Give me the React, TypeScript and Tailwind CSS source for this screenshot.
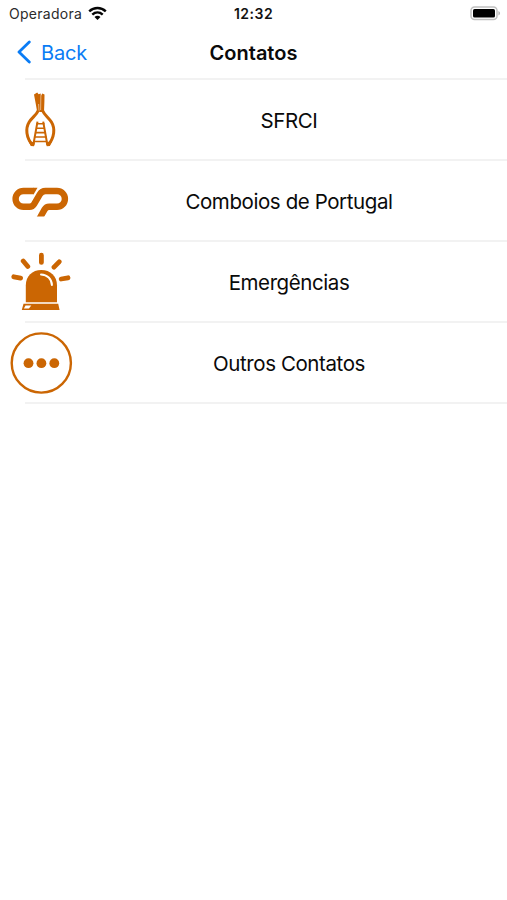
import type { ReactNode } from "react";

const ORANGE = "#cb6603";

function TowerIcon() {
  return (
    <svg width="70" height="70" viewBox="0 0 70 70" fill="none" stroke={ORANGE} className="block">
      <path d="M24 9.5L27.2 7.4l1.4 1.8 2-.8.5 2 1.2-1.8 2.2.8-.1 7-.4 10.5H27.2L25.6 18z" fill={ORANGE} stroke="none" />
      <path d="M30.9 9.5L30.6 25M28.6 19L29 27" stroke="#fff" strokeWidth=".5" />
      <path d="M28.3 25.5C26.5 30 22 32.5 19.2 37C15.2 43.5 16.2 52.5 22.3 59.8M32.5 25.5C34.3 30 38.6 32.5 41.4 37C45.4 43.5 44.4 52.5 38.3 59.8" strokeWidth="3" />
      <path d="M27.5 36.6L23.3 60M33.2 36.6L37.4 60" strokeWidth="2" />
      <path d="M26.5 38.8h8M26 43.2h9M25.3 47.6h10.4M24.5 52h12M23.8 56.5h13.4" strokeWidth="1.6" />
      <path d="M18.3 56L25 57.5 24 61.3 20.8 61zM42.3 56L35.7 57.5 36.8 61.3 39.9 61z" fill={ORANGE} stroke="none" />
    </svg>
  );
}

function TrainsIcon() {
  return (
    <svg width="75" height="50" viewBox="0 0 75 50" fill="none" className="block">
      <clipPath id="logo-base">
        <rect width="75" height="41.4" />
      </clipPath>
      <path
        clipPath="url(#logo-base)"
        d="M28.5 16H18.5a7.9 7.9 0 0 0 0 15.8H24.5q3 0 4.6-2.7L34.8 19.4Q36.8 16 40.5 16H52a7.9 7.9 0 0 1 0 15.8H44.2q-3 0-4.6 2.7L34.5 43.5"
        stroke={ORANGE}
        strokeWidth="6.4"
      />
      <path d="M28 12.8h4.5L28.7 19.2H28z" fill={ORANGE} />
    </svg>
  );
}

function SirenIcon() {
  return (
    <svg width="75" height="75" viewBox="0 0 75 75" fill="none" className="block">
      <path d="M20.8 57.2V40.5C20.8 31 27.3 25 36.3 25S52 31 52 40.5V57.2z" fill={ORANGE} />
      <path d="M36 29.5C42.2 29.7 46.7 33.8 46.9 40" stroke="#fff" strokeWidth="2" strokeLinecap="round" />
      <path d="M18.5 58.8h34.7l1.4 6.2H16.8z" fill={ORANGE} />
      <path d="M20.5 60.4h5.8l-2.4 3h-5z" fill="#fff" />
      <path d="M36.4 10.2v7.2M18.2 16l4.6 5.5M54.2 16.8l-5.2 5.4M8.8 31.8l6.8 1.3M63 32.8l-6.8 1.2" stroke={ORANGE} strokeWidth="4.8" strokeLinecap="round" />
    </svg>
  );
}

function MoreIcon() {
  return (
    <svg width="75" height="75" viewBox="0 0 75 75" fill="none" className="block">
      <circle cx="36.3" cy="38" r="29.6" stroke={ORANGE} strokeWidth="2.4" />
      <circle cx="23.5" cy="38.2" r="4.9" fill={ORANGE} />
      <circle cx="36.4" cy="38.2" r="4.9" fill={ORANGE} />
      <circle cx="49.3" cy="38.2" r="4.9" fill={ORANGE} />
    </svg>
  );
}

function StatusBar() {
  return (
    <div className="grid h-[27px] grid-cols-3 items-center">
      <div className="flex items-center pl-[9px]">
        <span className="w-[79px] text-[14px] leading-5 tracking-[0.28px] text-[#2b2b2b]">Operadora</span>
        <svg width="19" height="15" viewBox="0 0 19 15" fill="none" stroke="#050505" strokeWidth="2.4" className="block">
          <path d="M1.2 5.3C6 .8 13 .8 17.8 5.3M4.3 8.7C7.4 5.8 11.6 5.8 14.7 8.7" />
          <path d="M6.5 10.9C8.2 9.3 10.8 9.3 12.5 10.9L9.5 13.9z" fill="#050505" stroke="none" />
        </svg>
      </div>
      <span className="text-center text-[14px] leading-5 font-semibold tracking-[0.5px] text-[#111]">12:32</span>
      <div className="flex justify-end pr-[5px]">
        <svg width="32" height="15" viewBox="0 0 32 15" fill="none" className="block">
          <rect x="1" y="1" width="26" height="12.5" rx="3.5" stroke="#c0c0c0" strokeWidth="1.5" />
          <rect x="3" y="3" width="22" height="8.5" rx="1.6" fill="#000" />
          <path d="M28.4 5v4.5c2.2-.8 2.2-3.7 0-4.5z" fill="#b8b8b8" />
        </svg>
      </div>
    </div>
  );
}

function Row({ label, icon }: { label: string; icon: ReactNode }) {
  return (
    <li className="flex h-[81px] flex-col">
      <div className="flex h-[79px] items-center">
        <div className="w-[71px] shrink-0">{icon}</div>
        <span className="flex-1 pt-[2px] text-center text-[20.5px] leading-6 tracking-[-0.41px] text-[#0a0a0a]">{label}</span>
      </div>
      <div className="ml-[25px] h-[2px] bg-[#f2f2f2]" />
    </li>
  );
}

export default function App() {
  return (
    <main className="h-[900px] w-[507px] overflow-hidden bg-white font-['Inter','Liberation_Sans',sans-serif]">
      <StatusBar />
      <header className="grid h-[51px] grid-cols-3 items-center">
        <button className="flex items-center gap-[10px] pl-[17px] text-[#0a7cf5]">
          <svg width="14" height="25" viewBox="0 0 14 25" fill="none" stroke="currentColor" strokeWidth="2.8" strokeLinecap="round" strokeLinejoin="round" className="block">
            <path d="M12.3 2L2 12l10.3 10" />
          </svg>
          <span className="text-[20px] leading-6 tracking-[-0.2px]">Back</span>
        </button>
        <h1 className="text-center text-[20px] leading-6 font-semibold text-[#0a0a0a]">Contatos</h1>
      </header>
      <div className="ml-[25px] h-[2px] bg-[#f2f2f2]" />
      <ul>
        <Row label="SFRCI" icon={<div className="pt-[1px] pl-[10px]"><TowerIcon /></div>} />
        <Row label="Comboios de Portugal" icon={<div className="pb-[1px] pl-[5px]"><TrainsIcon /></div>} />
        <Row label="Emergências" icon={<div className="pt-[2px] pl-[5px]"><SirenIcon /></div>} />
        <Row label="Outros Contatos" icon={<div className="pl-[5px]"><MoreIcon /></div>} />
      </ul>
    </main>
  );
}
